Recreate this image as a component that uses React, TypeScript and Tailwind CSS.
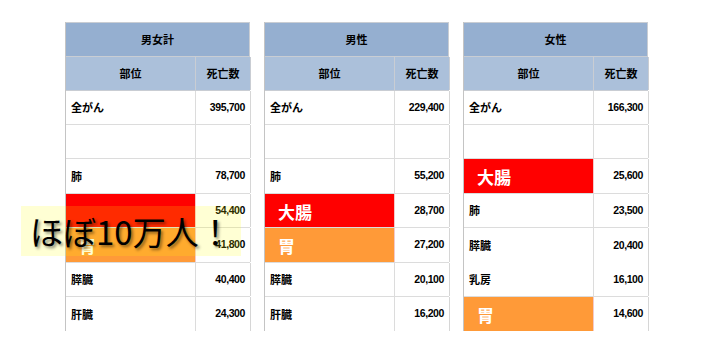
type Row = { label: string; value: string; tone?: 'red' | 'orange'; hideLabel?: boolean; noLine?: boolean }

const tables: { title: string; rows: Row[] }[] = [
  {
    title: '男女計',
    rows: [
      { label: '全がん', value: '395,700' },
      { label: '', value: '' },
      { label: '肺', value: '78,700' },
      { label: '大腸', value: '54,400', tone: 'red', hideLabel: true },
      { label: '胃', value: '41,800', tone: 'orange' },
      { label: '膵臓', value: '40,400' },
      { label: '肝臓', value: '24,300' },
    ],
  },
  {
    title: '男性',
    rows: [
      { label: '全がん', value: '229,400' },
      { label: '', value: '' },
      { label: '肺', value: '55,200' },
      { label: '大腸', value: '28,700', tone: 'red' },
      { label: '胃', value: '27,200', tone: 'orange' },
      { label: '膵臓', value: '20,100' },
      { label: '肝臓', value: '16,200' },
    ],
  },
  {
    title: '女性',
    rows: [
      { label: '全がん', value: '166,300' },
      { label: '', value: '' },
      { label: '大腸', value: '25,600', tone: 'red' },
      { label: '肺', value: '23,500' },
      { label: '膵臓', value: '20,400', noLine: true },
      { label: '乳房', value: '16,100' },
      { label: '胃', value: '14,600', tone: 'orange' },
    ],
  },
]

const rowHeights = ['h-[34px]', 'h-[34px]', 'h-[35px]', 'h-[34px]', 'h-[35px]', 'h-[34px]', 'h-[34px]']

function DeathTable({ title, rows }: { title: string; rows: Row[] }) {
  return (
    <div className="w-[185px] border-l border-[#c4c4c4] text-[11px] font-bold text-black">
      <div className="h-[35px] flex items-center justify-center bg-[#95afd0] border-t border-r border-b border-[#c9cdd3]">
        {title}
      </div>
      <div className="grid grid-cols-[130px_55px] h-[34px] bg-[#abc0da] border-b border-[#c9cdd3]">
        <div className="flex items-center justify-center border-r border-[#c9cdd3]">部位</div>
        <div className="flex items-center justify-center border-r border-[#c9cdd3]">死亡数</div>
      </div>
      {rows.map((r, i) => {
        const last = i === rows.length - 1
        const line = last || r.noLine ? '' : 'border-b border-[#dcdcdc]'
        const bg = r.tone === 'red' ? 'bg-[#ff0000]' : r.tone === 'orange' ? 'bg-[#ff9a38]' : 'bg-white'
        return (
          <div key={i} className={`grid grid-cols-[130px_55px] ${rowHeights[i]} ${line}`}>
            {r.tone ? (
              <div className={`${bg} flex items-center pl-[13px] pt-[2px] text-[17px] text-white border-r border-[#f3c9c9]`}>
                {r.hideLabel ? '' : r.label}
              </div>
            ) : (
              <div className="flex items-center pl-[5px] border-r border-[#dcdcdc]">{r.label}</div>
            )}
            <div className="flex items-center justify-end pr-[5px] border-r border-[#d6d6d6] font-['Liberation_Sans',sans-serif] text-[10.5px] tracking-[-0.4px]">
              {r.value}
            </div>
          </div>
        )
      })}
    </div>
  )
}

export default function App() {
  return (
    <div className="relative w-[721px] h-[338px] bg-white overflow-hidden font-['Noto_Sans_CJK_JP','Noto_Sans',sans-serif]">
      <div className="flex gap-[14px] pl-[65px] pt-[22px]">
        {tables.map((t) => (
          <DeathTable key={t.title} title={t.title} rows={t.rows} />
        ))}
      </div>
      <div className="absolute left-[21px] top-[206px] w-[220px] h-[50px] bg-[rgba(255,255,0,0.17)] flex items-center pl-[9px] text-[33px] leading-none text-black [text-shadow:2px_2px_3px_rgba(0,0,0,0.45)]">
        ほぼ10万人！
      </div>
    </div>
  )
}
